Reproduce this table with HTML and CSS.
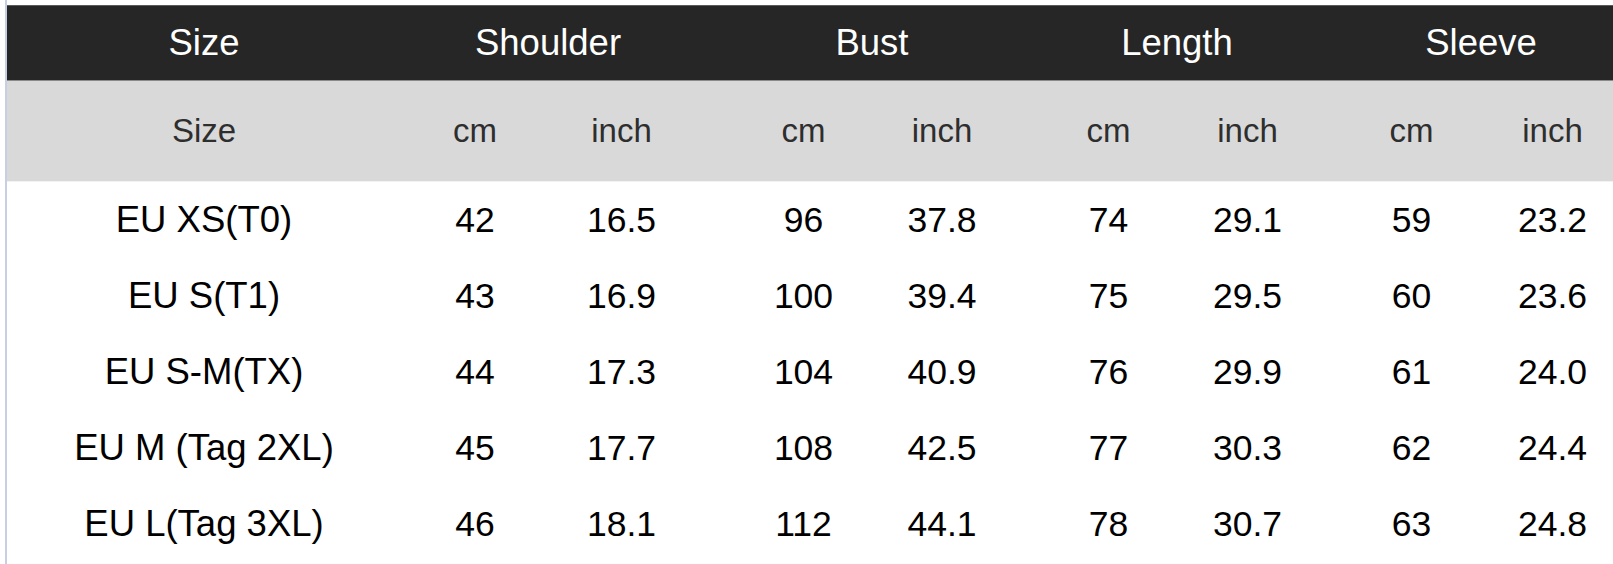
FILE: index.html
```html
<!DOCTYPE html>
<html>
<head>
<meta charset="utf-8">
<link rel="stylesheet" href="styles.css">
</head>
<body>
<div class="frame">
  <div class="chart">
    <div class="row head">
      <div class="cell">Size</div>
      <div class="cell h-shoulder">Shoulder</div>
      <div class="cell h-bust">Bust</div>
      <div class="cell">Length</div>
      <div class="cell h-sleeve">Sleeve</div>
    </div>
    <div class="row grid sub">
      <div class="cell">Size</div>
      <div class="cell c2">cm</div><div class="cell c3">inch</div>
      <div class="cell c4">cm</div><div class="cell c5">inch</div>
      <div class="cell c6">cm</div><div class="cell c7">inch</div>
      <div class="cell c8">cm</div><div class="cell c9">inch</div>
    </div>
    <div class="row grid body">
      <div class="cell label">EU XS(T0)</div>
      <div class="cell c2">42</div><div class="cell c3">16.5</div>
      <div class="cell c4">96</div><div class="cell c5">37.8</div>
      <div class="cell c6">74</div><div class="cell c7">29.1</div>
      <div class="cell c8">59</div><div class="cell c9">23.2</div>
    </div>
    <div class="row grid body">
      <div class="cell label">EU S(T1)</div>
      <div class="cell c2">43</div><div class="cell c3">16.9</div>
      <div class="cell c4">100</div><div class="cell c5">39.4</div>
      <div class="cell c6">75</div><div class="cell c7">29.5</div>
      <div class="cell c8">60</div><div class="cell c9">23.6</div>
    </div>
    <div class="row grid body">
      <div class="cell label">EU S-M(TX)</div>
      <div class="cell c2">44</div><div class="cell c3">17.3</div>
      <div class="cell c4">104</div><div class="cell c5">40.9</div>
      <div class="cell c6">76</div><div class="cell c7">29.9</div>
      <div class="cell c8">61</div><div class="cell c9">24.0</div>
    </div>
    <div class="row grid body">
      <div class="cell label">EU M (Tag 2XL)</div>
      <div class="cell c2">45</div><div class="cell c3">17.7</div>
      <div class="cell c4">108</div><div class="cell c5">42.5</div>
      <div class="cell c6">77</div><div class="cell c7">30.3</div>
      <div class="cell c8">62</div><div class="cell c9">24.4</div>
    </div>
    <div class="row grid body">
      <div class="cell label">EU L(Tag 3XL)</div>
      <div class="cell c2">46</div><div class="cell c3">18.1</div>
      <div class="cell c4">112</div><div class="cell c5">44.1</div>
      <div class="cell c6">78</div><div class="cell c7">30.7</div>
      <div class="cell c8">63</div><div class="cell c9">24.8</div>
    </div>
  </div>
</div>
</body>
</html>
```

FILE: styles.css
```css
html, body {
  margin: 0;
  padding: 0;
  background: #ffffff;
  overflow: hidden;
}

body {
  font-family: "Liberation Sans", Arial, sans-serif;
}

.frame {
  margin-left: 5px;
  border-left: 2px solid #c9cee0;
  padding-top: 5px;
  height: 559px;
}

.chart {
  width: 1606px;
}

.row {
  display: grid;
}

.cell {
  text-align: center;
  white-space: nowrap;
}

.head {
  grid-template-columns: 394px 311px 313px 304px 284px;
  background: #262626;
  color: #ffffff;
  font-size: 36.5px;
  border-top: 1px solid #5a5a5a;
  border-bottom: 1px solid #8a8a8a;
  box-sizing: border-box;
  height: 76px;
  line-height: 74px;
}

.h-shoulder { padding-right: 17px; }
.h-bust { padding-left: 7px; }
.h-sleeve { padding-left: 20px; }

.grid {
  grid-template-columns: 394px 148px 163px 161px 152px 153px 151px 153px 131px;
}

.sub {
  height: 100px;
  line-height: 100px;
  background: #d9d9d9;
  color: #2e2e2e;
  font-size: 33px;
  border-bottom: 1px solid #f2f2f2;
}

.body {
  height: 76px;
  line-height: 76px;
  color: #000000;
  font-size: 35.5px;
}

.body .label {
  font-size: 36.5px;
}

.c3 { padding-right: 18px; }
.c4 { padding-left: 22px; }
.c5 { padding-right: 14px; }
.c6 { padding-left: 14px; }
.c7 { padding-right: 12px; }
.c8 { padding-left: 12px; }
.c9 { padding-left: 10px; }
```
